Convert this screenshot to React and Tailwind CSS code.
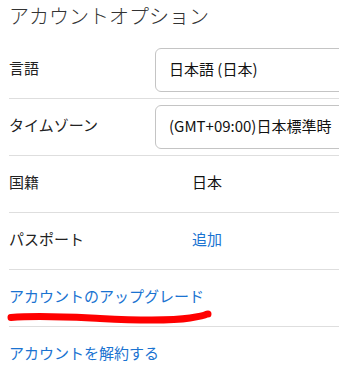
import React from "react";

const font = "font-['Noto_Sans_CJK_JP','Noto_Sans',sans-serif]";

function Row({ label, children, className = "" }) {
  return (
    <div className={"flex items-center h-[57px] border-b border-[#dedede] " + className}>
      <div className="w-[146px] shrink-0 text-[15px] text-[#222] pb-[4px]">{label}</div>
      {children}
    </div>
  );
}

export default function App() {
  return (
    <div className={"relative w-[339px] h-[384px] overflow-hidden bg-white " + font}>
      <div className="pl-[9px]">
        <h1 className="h-[42px] text-[20px] leading-[32px] font-light text-[#333]">アカウントオプション</h1>
        <Row label="言語">
          <div className="shrink-0 w-[230px] h-[44px] border border-[#c4c4c4] rounded-[6px] flex items-center pl-[13px] pb-[2px] text-[15px] text-[#111]">
            日本語 (日本)
          </div>
        </Row>
        <Row label="タイムゾーン">
          <div className="shrink-0 w-[230px] h-[44px] border border-[#c4c4c4] rounded-[6px] flex items-center pl-[13px] pb-[2px] text-[15px] text-[#111] whitespace-nowrap">
            (GMT+09:00)日本標準時
          </div>
        </Row>
        <Row label="国籍">
          <div className="pl-[37px] pb-[4px] text-[15px] text-[#111]">日本</div>
        </Row>
        <Row label="パスポート">
          <a className="pl-[37px] pb-[4px] text-[15px] text-[#1a73d1] cursor-pointer">追加</a>
        </Row>
        <div className="flex items-center h-[57px] border-b border-[#dedede]">
          <a className="pb-[4px] text-[15px] text-[#1a73d1] cursor-pointer">アカウントのアップグレード</a>
        </div>
        <div className="flex items-center h-[56px]">
          <a className="pb-[4px] text-[15px] text-[#1a73d1] cursor-pointer">アカウントを解約する</a>
        </div>
      </div>
      <svg className="absolute top-0 left-0 pointer-events-none" width="339" height="384" viewBox="0 0 339 384">
        <path
          d="M11 317.5 C 40 315, 70 317, 100 318.5 S 170 321, 190 318 S 205 314, 208 314"
          fill="none"
          stroke="#ff0000"
          strokeWidth="7"
          strokeLinecap="round"
        />
      </svg>
    </div>
  );
}
